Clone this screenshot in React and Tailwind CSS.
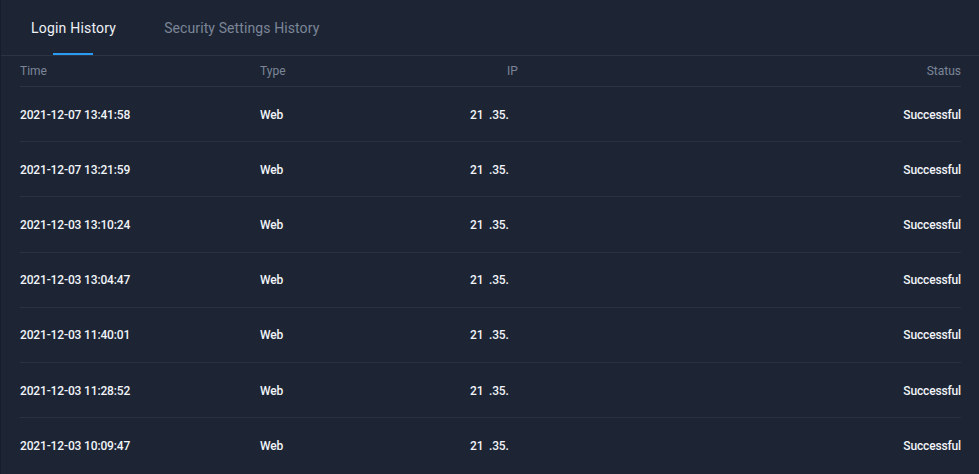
const rows = [
  "2021-12-07 13:41:58",
  "2021-12-07 13:21:59",
  "2021-12-03 13:10:24",
  "2021-12-03 13:04:47",
  "2021-12-03 11:40:01",
  "2021-12-03 11:28:52",
  "2021-12-03 10:09:47",
];

export default function App() {
  return (
    <div className="min-h-screen border-l border-[#171e2b] bg-[#1d2535] font-['Roboto','Liberation_Sans',sans-serif]">
      {/* tabs */}
      <div className="flex h-[56px] border-b border-[#2a3445] pl-[30px] text-sm">
        <div className="relative flex items-center pt-[1px] tracking-[0.2px] text-[#eef1f6]">
          Login History
          <span className="absolute bottom-0 left-[22px] h-[2px] w-[40px] bg-[#2a9bf0]" />
        </div>
        <div className="ml-[48px] flex items-center pt-[1px] tracking-[0.1px] text-[#7c8597]">Security Settings History</div>
      </div>

      <div className="ml-[19px] mr-[18px]">
        <div className="flex h-[31px] items-center border-b border-[#2a3445] text-xs text-[#7c8597]">
          <div className="w-[240px]">Time</div>
          <div className="w-[210px]">Type</div>
          <div className="w-[100px] pl-[37px]">IP</div>
          <div className="flex-1 text-right">Status</div>
        </div>
        {rows.map((t, i) => (
          <div
            key={t}
            className={`flex h-[55.2px] items-center pt-[1px] text-xs font-medium tracking-[-0.15px] text-[#f1f4f8] ${i < rows.length - 1 ? "border-b border-[#283243]" : ""}`}
          >
            <div className="w-[240px]">{t}</div>
            <div className="w-[210px]">Web</div>
            <div className="w-[100px] whitespace-pre">21  .35.</div>
            <div className="flex-1 text-right">Successful</div>
          </div>
        ))}
      </div>
    </div>
  );
}
